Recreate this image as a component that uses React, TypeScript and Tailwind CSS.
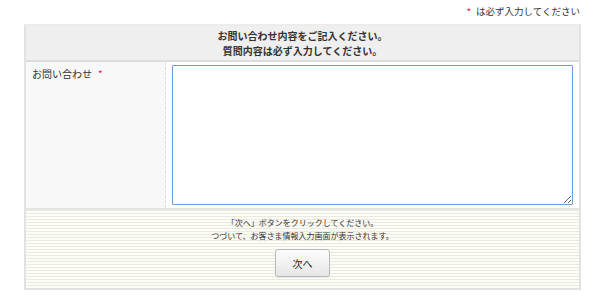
export default function App() {
  return (
    <div className="w-[600px] h-[298px] bg-white text-[#333] font-['Noto_Sans_CJK_JP','Noto_Sans',sans-serif]">
      <div className="h-[24px] pr-[20px] flex items-center justify-end text-[9.5px] leading-none">
        <span className="text-[#e8174f] mr-[5px] text-[10px]">*</span>
        <span>は必ず入力してください</span>
      </div>
      <div className="ml-[24px] w-[557px] border-2 border-[#e2e2e2] border-t-[#ececec]">
        <div className="h-[36px] bg-[#efefef] border-b-2 border-[#dcdcdc] flex flex-col items-center justify-center text-[10px] font-bold leading-[15px]">
          <p>お問い合わせ内容をご記入ください。</p>
          <p>質問内容は必ず入力してください。</p>
        </div>
        <div className="flex h-[148px] border-b-2 border-[#e4e4e4]">
          <div className="w-[140px] bg-[#f8f8f8] border-r border-dashed border-[#dddddd] pl-[6px] pt-[4px] text-[10px] leading-[16px]">
            お問い合わせ
            <span className="text-[#e8174f] ml-[6px] text-[10px]">*</span>
          </div>
          <div className="flex-1 bg-white pl-[6px] pr-[6px] pt-[3px] pb-[3px]">
            <textarea className="w-full h-full border-[1.5px] border-[#6f9be0] rounded-[1px] outline-none resize" />
          </div>
        </div>
        <div className="h-[78px] bg-[repeating-linear-gradient(to_bottom,#ebeadc_0px,#ebeadc_1px,#fcfcf8_1px,#fcfcf8_3px)] flex flex-col items-center pt-[6px]">
          <p className="text-[8px] leading-[13px]">「次へ」ボタンをクリックしてください。</p>
          <p className="text-[8px] leading-[13px]">つづいて、お客さま情報入力画面が表示されます。</p>
          <button className="mt-[7px] w-[55px] h-[28px] rounded-[3px] border border-[#b8b8b8] bg-[linear-gradient(to_bottom,#fdfdfd,#e6e6e6)] text-[10px] text-[#222] shadow-[0_1px_1px_rgba(0,0,0,0.08)]">
            次へ
          </button>
        </div>
      </div>
    </div>
  );
}
